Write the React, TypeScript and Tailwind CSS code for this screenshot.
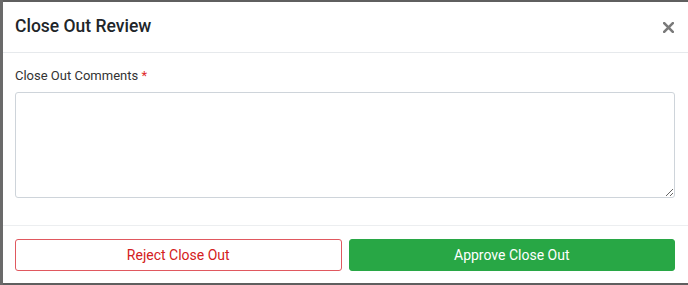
export default function App() {
  return (
    <div
      className="flex h-[285px] w-[688px] overflow-hidden bg-[#5f5f5f]"
      style={{ fontFamily: "Roboto, 'Liberation Sans', sans-serif" }}
    >
      <div className="w-[3px] shrink-0 bg-[#6a6a6a]" />
      <div className="mt-[2px] mb-[2px] flex flex-1 flex-col bg-white">
        {/* Header */}
        <div className="flex h-[51px] items-center justify-between border-b border-[#e6e9ec] pl-[12px] pr-[14px]">
          <h5 className="text-[17.5px] font-medium leading-none text-[#212529]">
            Close Out Review
          </h5>
          <svg width="11" height="11" viewBox="0 0 11 11" className="text-[#7a7a7a]">
            <path d="M1.2 1.2 L9.8 9.8 M9.8 1.2 L1.2 9.8" stroke="currentColor" strokeWidth="2.6" strokeLinecap="square" />
          </svg>
        </div>

        {/* Body */}
        <div className="flex flex-col border-b border-[#eceef0] pl-[12px] pr-[13px] pt-[15px] pb-[27px]">
          <label className="mb-[8px] text-[13px] leading-[16px] text-[#333]">
            Close Out Comments <span className="text-[#e02b2b]">*</span>
          </label>
          <textarea className="h-[106px] w-full resize-y rounded-[3px] border border-[#ced4da] bg-white outline-none" />
        </div>

        {/* Footer */}
        <div className="flex flex-1 gap-[7px] pl-[12px] pr-[13px] pt-[13px] pb-[11px]">
          <button className="flex h-[32px] flex-1 items-center justify-center rounded-[3px] border border-[#e0585f] bg-white text-[14px] text-[#d42020]">
            Reject Close Out
          </button>
          <button className="flex h-[32px] flex-1 items-center justify-center rounded-[3px] border border-[#28a745] bg-[#28a745] text-[14px] text-white">
            Approve Close Out
          </button>
        </div>
      </div>
    </div>
  );
}
